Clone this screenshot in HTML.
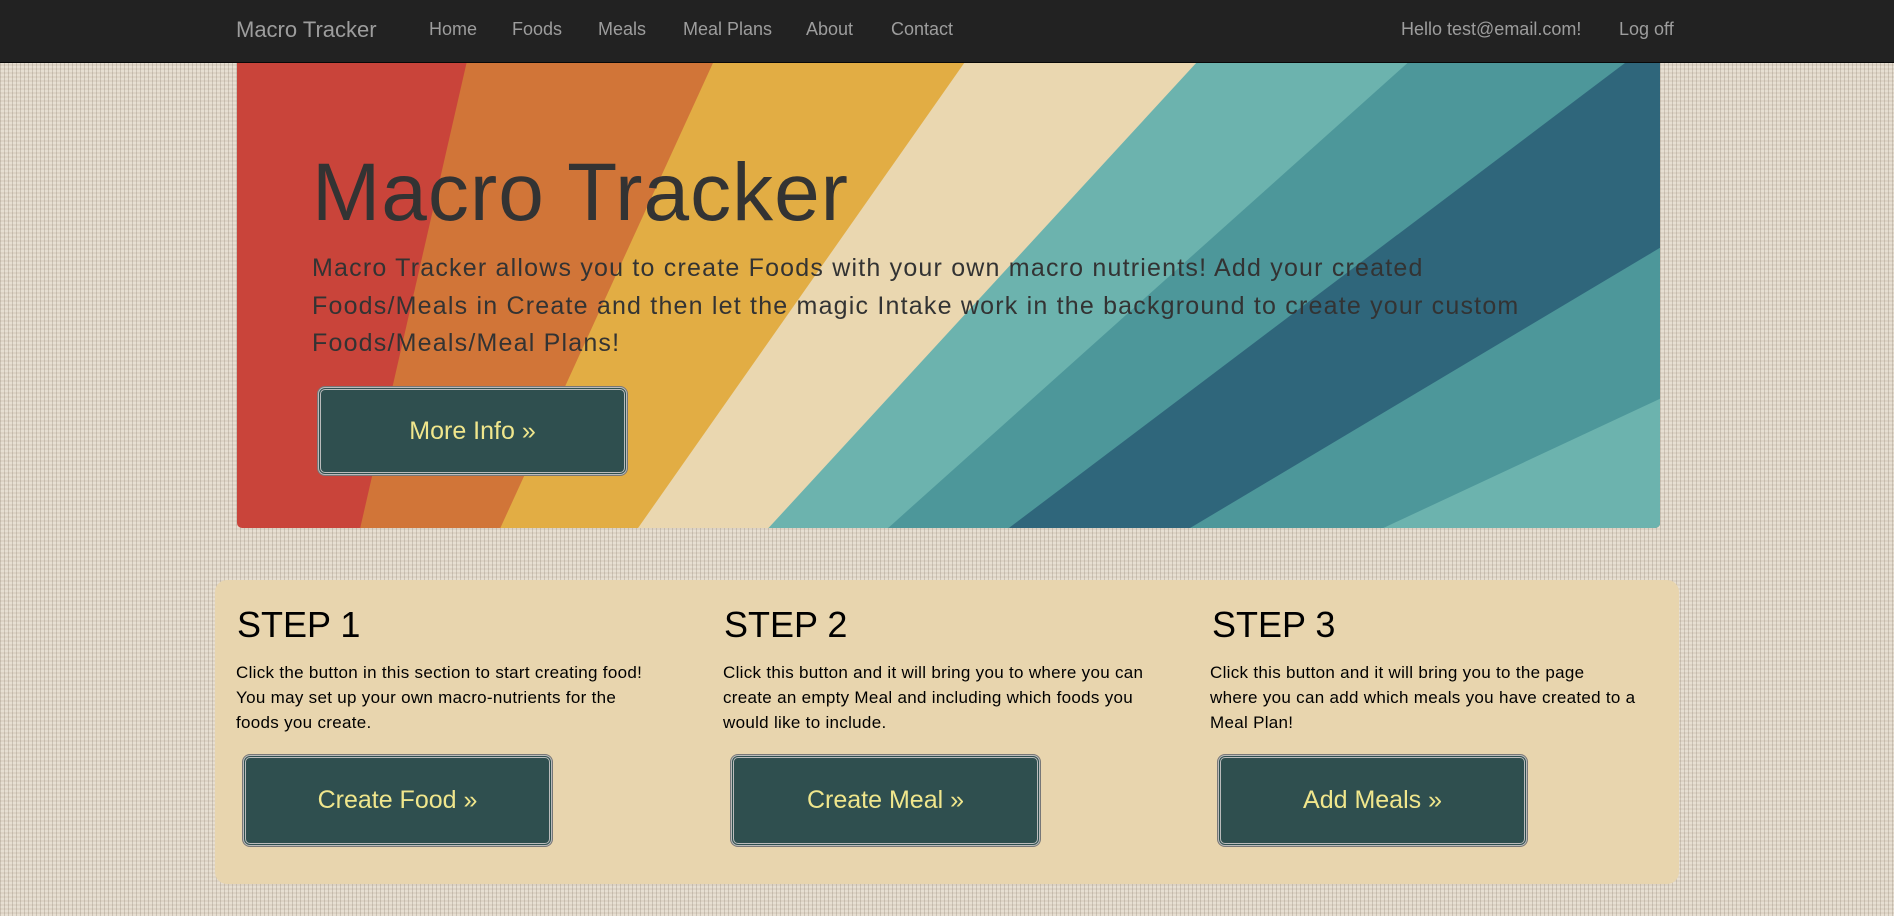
<!DOCTYPE html>
<html><head><meta charset="utf-8"><style>
*{margin:0;padding:0;box-sizing:border-box}
html,body{width:1894px;height:916px;overflow:hidden}
body{font-family:"Comic Sans MS","Liberation Sans",sans-serif;position:relative;
background-color:#ddd3c5;
background-image:repeating-linear-gradient(90deg,rgba(110,95,80,.22) 0 1px,transparent 1px 4px),repeating-linear-gradient(0deg,rgba(255,250,240,.3) 0 2px,transparent 2px 4px);}
.nav{position:absolute;left:0;top:0;width:1894px;height:63px;background:#222;border-bottom:1px solid #080808}
.nav span{position:absolute;top:19px;color:#9d9d9d;font-size:18px;white-space:nowrap}
.nav .brand{font-size:22px;top:17px}
.hero{position:absolute;left:237px;top:63px;width:1423px;height:465px;border-radius:0 0 5px 5px;overflow:hidden}
.hero svg{position:absolute;left:0;top:0}
.h1{position:absolute;left:312px;top:146px;font-size:82px;color:#333;white-space:nowrap;letter-spacing:1px}
.lead{position:absolute;left:312px;top:250px;font-size:25px;line-height:37.5px;color:#333;white-space:nowrap;letter-spacing:1.2px}
.btn{position:absolute;background:#2f4f4f;color:#f0e68c;border-radius:7px;border:3px double #bbb;box-shadow:0 0 0 1px #777;display:flex;align-items:center;justify-content:center;font-size:25px}
.panel{position:absolute;left:215px;top:580px;width:1464px;height:304px;background:#e8d5ae;border-radius:12px}
.step{position:absolute;top:604px;font-size:36px;color:#000}
.sp{position:absolute;top:660px;font-size:17px;line-height:25px;color:#000;white-space:nowrap;letter-spacing:.3px}
</style></head><body>
<div class="nav">
<span class="brand" style="left:236px">Macro Tracker</span>
<span style="left:429px">Home</span>
<span style="left:512px">Foods</span>
<span style="left:598px">Meals</span>
<span style="left:683px">Meal Plans</span>
<span style="left:806px">About</span>
<span style="left:891px">Contact</span>
<span style="left:1401px">Hello test@email.com!</span>
<span style="left:1619px">Log off</span>
</div>
<div class="hero">
<svg width="1423" height="465" viewBox="0 0 1178 385" preserveAspectRatio="none">
<rect width="1178" height="385" fill="#c9443a"/>
<polygon points="190,0 1178,0 1178,385 102,385" fill="#d17538"/>
<polygon points="394,0 1178,0 1178,385 218,385" fill="#e2ad44"/>
<polygon points="602,0 1178,0 1178,385 332,385" fill="#ead7b0"/>
<polygon points="794,0 1178,0 1178,385 440,385" fill="#6cb3ae"/>
<polygon points="969,0 1178,0 1178,385 539,385" fill="#4d979a"/>
<polygon points="1149,0 1178,0 1178,153 789,385 639,385" fill="#2f667b"/>
<polygon points="1178,278 1178,385 949,385" fill="#6cb3ae"/>
</svg>
</div>
<div class="h1">Macro Tracker</div>
<div class="lead">Macro Tracker allows you to create Foods with your own macro nutrients! Add your created<br>Foods/Meals in Create and then let the magic Intake work in the background to create your custom<br>Foods/Meals/Meal Plans!</div>
<div class="btn" style="left:318px;top:387px;width:309px;height:88px">More Info »</div>
<div class="panel"></div>
<div class="step" style="left:237px">STEP 1</div>
<div class="step" style="left:724px">STEP 2</div>
<div class="step" style="left:1212px">STEP 3</div>
<div class="sp" style="left:236px">Click the button in this section to start creating food!<br>You may set up your own macro-nutrients for the<br>foods you create.</div>
<div class="sp" style="left:723px">Click this button and it will bring you to where you can<br>create an empty Meal and including which foods you<br>would like to include.</div>
<div class="sp" style="left:1210px">Click this button and it will bring you to the page<br>where you can add which meals you have created to a<br>Meal Plan!</div>
<div class="btn" style="left:243px;top:755px;width:309px;height:91px">Create Food »</div>
<div class="btn" style="left:731px;top:755px;width:309px;height:91px">Create Meal »</div>
<div class="btn" style="left:1218px;top:755px;width:309px;height:91px">Add Meals »</div>
</body></html>
